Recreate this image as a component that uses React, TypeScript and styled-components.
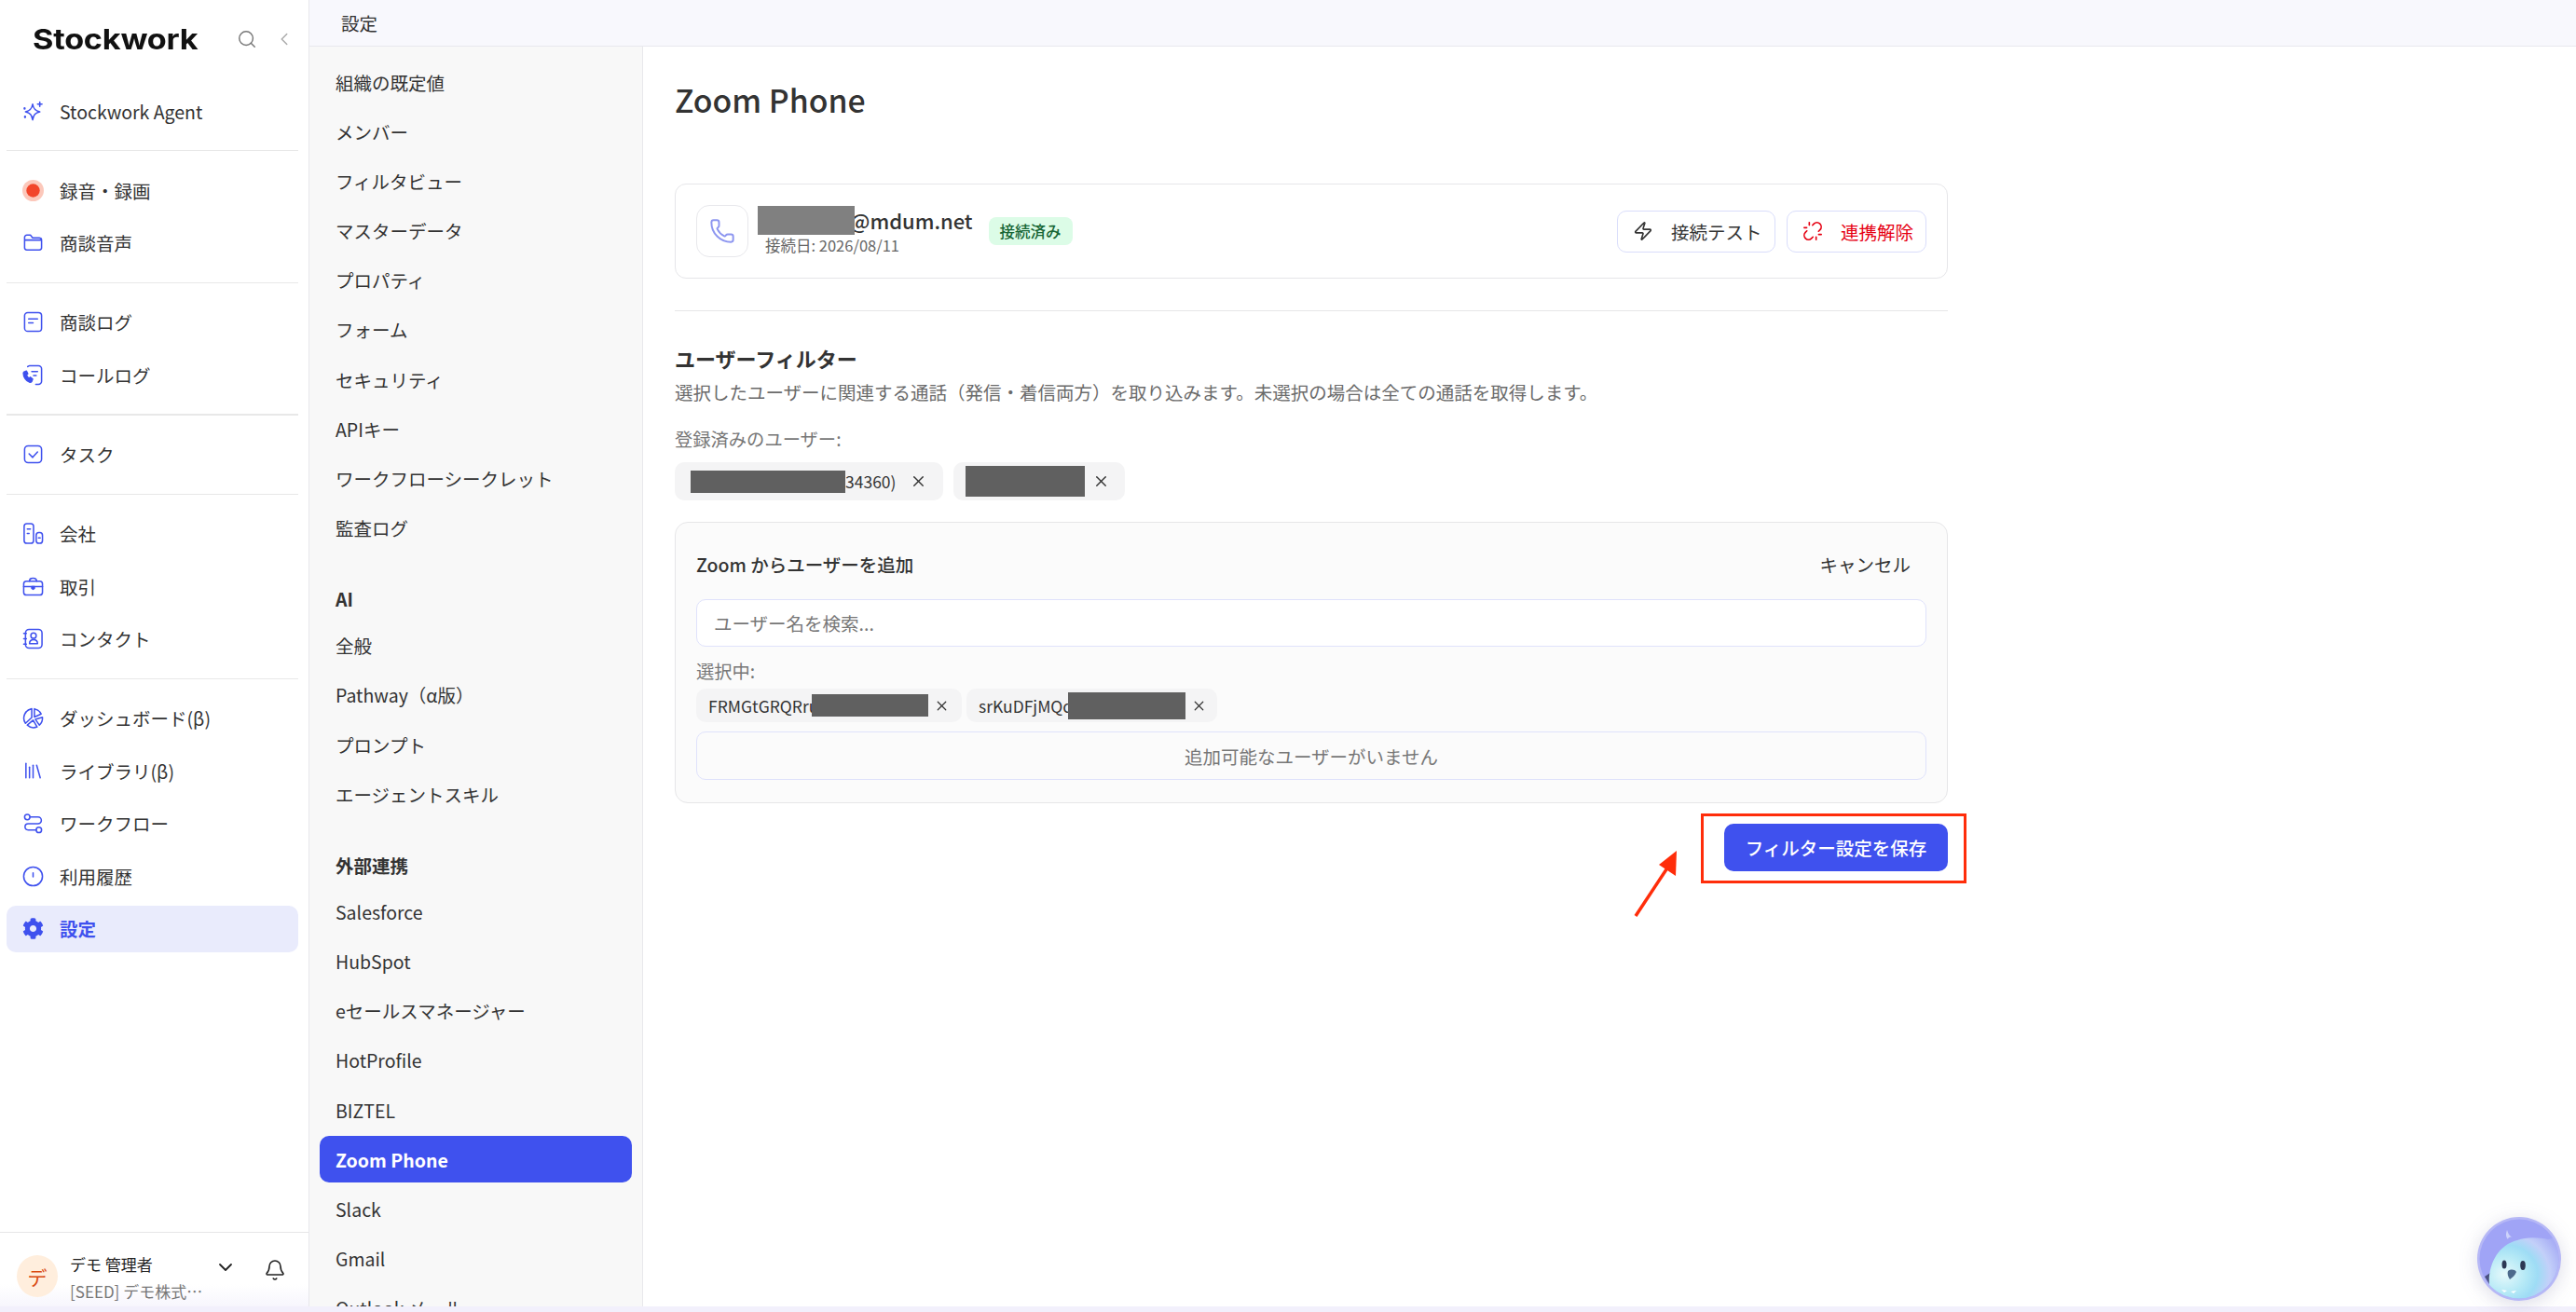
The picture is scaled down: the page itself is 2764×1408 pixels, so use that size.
import styled, { createGlobalStyle } from 'styled-components';
import { Bell, ChevronDown, ChevronLeft, Library, Phone, Search, Unlink, X, Zap } from 'lucide-react';
import { FaCog } from 'react-icons/fa';
import type { ReactNode } from 'react';

const BLUE = '#3f51ee';

const GlobalStyle = createGlobalStyle`
    html, body {
        margin: 0;
        padding: 0;
        background: #ffffff;
    }
    * {
        box-sizing: border-box;
    }
    body {
        font-family: 'Noto Sans CJK JP', 'Noto Sans', sans-serif;
        color: #333333;
    }
`;

const Page = styled.div`
    position: relative;
    width: 2764px;
    height: 1408px;
    overflow: hidden;
    display: flex;
    flex-direction: column;
`;

const Shell = styled.div`
    flex: 1;
    min-height: 0;
    display: flex;
`;

const BottomStrip = styled.div`
    height: 6px;
    background: #f2f0fc;
`;

const Sidebar = styled.aside`
    width: 332px;
    flex-shrink: 0;
    border-right: 1px solid #e8e8ec;
    display: flex;
    flex-direction: column;
    background: #ffffff;
`;

const SidebarHeader = styled.div`
    height: 84px;
    margin-bottom: 10px;
    padding-left: 35px;
    display: flex;
    align-items: center;
    color: #777777;
`;

const Logo = styled.div`
    width: 219px;
    font-family: 'Inter', sans-serif;
    font-weight: 700;
    font-size: 30px;
    letter-spacing: -0.2px;
    color: #111111;
    transform: scaleX(1.14);
    transform-origin: left center;
`;

const CollapseIcon = styled.span`
    display: flex;
    margin-left: 18px;
    color: #aaaaaa;
`;

const Nav = styled.nav`
    padding: 0 11px 0 7px;
`;

const NavGroup = styled.div`
    display: flex;
    flex-direction: column;
    gap: 6.4px;
`;

const NavDivider = styled.div`
    height: 1.5px;
    margin: 16.9px 0;
    background: #e8e8e8;
`;

const NavRow = styled.div<{ $active?: boolean }>`
    height: 50px;
    padding-left: 17px;
    display: flex;
    align-items: center;
    gap: 17px;
    border-radius: 10px;
    font-size: 19.5px;
    font-weight: ${(p) => (p.$active ? 700 : 400)};
    color: ${(p) => (p.$active ? BLUE : '#333333')};
    background: ${(p) => (p.$active ? '#e9ebfc' : 'transparent')};
`;

const NavIcon = styled.svg`
    width: 23px;
    height: 23px;
    flex-shrink: 0;
    fill: none;
    stroke: ${BLUE};
    stroke-width: 1.6;
    stroke-linecap: round;
    stroke-linejoin: round;
`;

const SidebarFooter = styled.div`
    margin-top: auto;
    height: 80px;
    padding: 14px 0 0 18px;
    border-top: 1px solid #e6e6e8;
    display: flex;
    align-items: center;
    background: linear-gradient(180deg, #ffffff 70%, #f7f6fd 100%);
`;

const Avatar = styled.div`
    width: 44px;
    height: 45px;
    border-radius: 50%;
    flex-shrink: 0;
    background: #ffeedd;
    color: #d9480f;
    font-size: 21px;
    display: flex;
    align-items: center;
    justify-content: center;
`;

const UserInfo = styled.div`
    width: 155px;
    margin: 2px 0 0 13px;
    display: flex;
    flex-direction: column;
    gap: 4px;
`;

const UserName = styled.div`
    font-size: 17px;
    line-height: 25px;
    color: #222222;
`;

const UserOrg = styled.div`
    font-size: 17px;
    line-height: 25px;
    color: #777777;
    white-space: nowrap;
`;

const FooterButton = styled.span<{ $gap: number; $lift: number }>`
    display: flex;
    margin-left: ${(p) => p.$gap}px;
    margin-bottom: ${(p) => p.$lift}px;
    color: #222222;
`;

const MainColumn = styled.div`
    flex: 1;
    min-width: 0;
    display: flex;
    flex-direction: column;
`;

const TopBar = styled.header`
    height: 50px;
    flex-shrink: 0;
    padding-left: 34px;
    display: flex;
    align-items: center;
    font-size: 19.5px;
    background: #f8f8fd;
    border-bottom: 1px solid #e8e8ee;
`;

const Workspace = styled.div`
    flex: 1;
    min-height: 0;
    display: flex;
`;

const SubNav = styled.nav`
    width: 358px;
    flex-shrink: 0;
    padding: 13px 11px 0 11px;
    overflow: hidden;
    background: #f8f8f8;
    border-right: 1px solid #e8e8ec;
`;

const SubNavItem = styled.div<{ $active?: boolean }>`
    height: 50px;
    margin-bottom: 3.2px;
    padding-left: 17px;
    display: flex;
    align-items: center;
    border-radius: 10px;
    font-size: 19.5px;
    font-weight: ${(p) => (p.$active ? 600 : 400)};
    color: ${(p) => (p.$active ? '#ffffff' : '#333333')};
    background: ${(p) => (p.$active ? BLUE : 'transparent')};
`;

const SubNavHeading = styled.div`
    height: 36px;
    margin: 33px 0 7px;
    padding-left: 17px;
    display: flex;
    align-items: center;
    font-size: 19.5px;
    font-weight: 600;
    color: #333333;
`;

const Content = styled.main`
    flex: 1;
    min-width: 0;
    padding: 32px 0 0 34px;
`;

const ContentInner = styled.div`
    width: 1366px;
    display: flex;
    flex-direction: column;
`;

const Title = styled.h1`
    margin: 0 0 65px;
    font-size: 33.8px;
    line-height: 50px;
    font-weight: 500;
    color: #333333;
`;

const ConnectionCard = styled.section`
    height: 102px;
    padding: 0 22px;
    border: 1px solid #e6e6e9;
    border-radius: 12px;
    display: flex;
    align-items: center;
`;

const PhoneTile = styled.div`
    width: 56px;
    height: 56px;
    border: 1px solid #e8e8ec;
    border-radius: 14px;
    display: flex;
    align-items: center;
    justify-content: center;
    color: #8d96f0;
`;

const AccountInfo = styled.div`
    margin-left: 10px;
    display: flex;
    flex-direction: column;
`;

const AccountEmail = styled.div`
    height: 30px;
    display: flex;
    align-items: center;
    font-size: 22px;
    font-weight: 500;
    color: #333333;
`;

const Redaction = styled.span<{ $w: number; $h: number; $tone?: string; $overlap?: number; $lead?: number }>`
    display: block;
    flex-shrink: 0;
    position: relative;
    width: ${(p) => p.$w}px;
    height: ${(p) => p.$h}px;
    margin-left: ${(p) => -(p.$lead ?? 0)}px;
    margin-right: ${(p) => -(p.$overlap ?? 0)}px;
    background: ${(p) => p.$tone ?? '#606060'};
`;

const ConnectedDate = styled.div`
    margin-left: 8px;
    font-size: 16.5px;
    line-height: 24px;
    color: #666666;
`;

const StatusBadge = styled.span`
    height: 30px;
    margin: 0 0 0 17px;
    padding: 0 12px;
    display: flex;
    align-items: center;
    border-radius: 8px;
    font-size: 16.5px;
    font-weight: 500;
    color: #166534;
    background: #dcfce7;
`;

const CardActions = styled.div`
    margin-left: auto;
    display: flex;
    gap: 12px;
`;

const OutlineButton = styled.button<{ $danger?: boolean; $width: number }>`
    width: ${(p) => p.$width}px;
    height: 45px;
    padding: 0 0 0 16px;
    display: flex;
    align-items: center;
    gap: 19px;
    font-family: inherit;
    font-size: 19.5px;
    color: ${(p) => (p.$danger ? '#e60012' : '#333333')};
    background: #ffffff;
    border: 1px solid #d9ddfb;
    border-radius: 10px;
`;

const SectionDivider = styled.div`
    height: 1px;
    margin: 34px 0 35px;
    background: #e6e6e8;
`;

const SectionTitle = styled.h2`
    margin: 0;
    font-size: 22px;
    line-height: 30px;
    font-weight: 600;
    color: #333333;
`;

const SectionText = styled.p`
    margin: 8px 0 0;
    font-size: 19.5px;
    line-height: 28px;
    color: #6b6b6b;
`;

const FieldLabel = styled.div<{ $top: number }>`
    margin-top: ${(p) => p.$top}px;
    font-size: 19.3px;
    line-height: 26px;
    color: #777777;
`;

const ChipRow = styled.div<{ $gap: number; $top: number }>`
    margin-top: ${(p) => p.$top}px;
    display: flex;
    gap: ${(p) => p.$gap}px;
`;

const Chip = styled.span<{ $w: number; $h: number; $pad: number }>`
    width: ${(p) => p.$w}px;
    height: ${(p) => p.$h}px;
    padding-left: ${(p) => p.$pad}px;
    display: flex;
    align-items: center;
    border-radius: 10px;
    font-size: 17.5px;
    color: #333333;
    background: #f4f4f5;
    overflow: hidden;
    white-space: nowrap;
`;

const ChipClose = styled.span<{ $gap: number }>`
    display: flex;
    margin-left: ${(p) => p.$gap}px;
    color: #333333;
`;

const AddPanel = styled.section`
    height: 302px;
    margin-top: 23px;
    padding: 25px 22px 0;
    display: flex;
    flex-direction: column;
    background: #fbfbfb;
    border: 1px solid #e6e6e8;
    border-radius: 14px;
`;

const AddPanelHeader = styled.div`
    height: 38px;
    padding-right: 17px;
    display: flex;
    align-items: center;
    justify-content: space-between;
`;

const AddPanelTitle = styled.div`
    font-size: 19.5px;
    font-weight: 500;
    color: #333333;
`;

const CancelText = styled.span`
    font-size: 19.5px;
    color: #333333;
`;

const SearchInput = styled.input`
    height: 51px;
    margin-top: 19px;
    padding: 0 18px;
    font-family: inherit;
    font-size: 19.5px;
    background: #ffffff;
    border: 1px solid #dfe2fb;
    border-radius: 10px;
    outline: none;
    &::placeholder {
        color: #777777;
        opacity: 1;
    }
`;

const EmptyBox = styled.div`
    height: 52px;
    margin-top: 10px;
    display: flex;
    align-items: center;
    justify-content: center;
    font-size: 19.5px;
    color: #777777;
    border: 1px solid #dfe2fb;
    border-radius: 10px;
`;

const SaveRow = styled.div`
    margin-top: 22px;
    display: flex;
    justify-content: flex-end;
`;

const SaveButton = styled.button`
    width: 240px;
    height: 51px;
    font-family: inherit;
    font-size: 19.5px;
    font-weight: 500;
    color: #ffffff;
    background: ${BLUE};
    border: none;
    border-radius: 10px;
`;

// annotation drawn on top of the screenshot
const Highlight = styled.div`
    position: absolute;
    left: 1825px;
    top: 873px;
    width: 285px;
    height: 75px;
    border: 3.5px solid #ff2d0a;
`;

const ArrowMark = styled.svg`
    position: absolute;
    left: 1745px;
    top: 905px;
    width: 65px;
    height: 85px;
`;

const Assistant = styled.svg`
    position: absolute;
    left: 2658px;
    top: 1306px;
    width: 90px;
    height: 90px;
    filter: drop-shadow(0 4px 10px rgba(60, 60, 120, 0.18));
`;

const SparkIcon = () => (
    <NavIcon viewBox="0 0 24 24">
        <path d="M11.500 4c.9 5.200 2.800 7.300 8 8.500-5.200 1.100-7.100 3.300-8 9-.9-5.700-2.800-7.900-8-9 5.200-1.200 7.100-3.300 8-8.500z" />
        <path d="M19.500 1.500v5M17 4h5" />
        <path d="M2.500 8.500v.5M3 18v.5" strokeWidth="2.400" />
    </NavIcon>
);

const RecordIcon = () => (
    <NavIcon viewBox="0 0 24 24" style={{ stroke: 'none' }}>
        <circle cx="12" cy="12" r="12" fill="#fcc8bb" />
        <circle cx="12" cy="12" r="7.500" fill="#f2452a" />
    </NavIcon>
);

const FolderIcon = () => (
    <NavIcon viewBox="0 0 24 24">
        <path d="M2.500 6a2.500 2.500 0 0 1 2.500-2.500h4l2.500 3h7.500a2.500 2.500 0 0 1 2.500 2.500v8.500a2.500 2.500 0 0 1-2.500 2.500H5A2.500 2.500 0 0 1 2.500 17.500zM2.500 9h19" />
    </NavIcon>
);

const NoteIcon = () => (
    <NavIcon viewBox="0 0 24 24">
        <rect x="2.500" y="1.500" width="19" height="21" rx="3.500" />
        <path d="M7 8.500h10M7 13h5" />
    </NavIcon>
);

const CallLogIcon = () => (
    <NavIcon viewBox="0 0 24 24">
        <path d="M6 2.500A3.500 3.500 0 0 1 8 1.500h10A3.500 3.500 0 0 1 21.500 5v14a3.500 3.500 0 0 1-3.500 3.500h-3" />
        <path d="M10.500 8h6.500M12.500 12.500h3" />
        <path
            d="M2 8.500l2.500-1 1.500 3-1.500 1.200c.6 1.800 1.600 3.200 3 4l1.400-1.200 2.600 2-1 2.500c-.6.900-1.600 1.200-2.600.9C4.200 19 1.200 14 1.200 10c0-.6.300-1.100.800-1.500z"
            fill={BLUE}
        />
    </NavIcon>
);

const TaskIcon = () => (
    <NavIcon viewBox="0 0 24 24">
        <rect x="2.500" y="2.500" width="19" height="19" rx="4" />
        <path d="M7.500 11.500l4 4 5.500-6" />
    </NavIcon>
);

const CompanyIcon = () => (
    <NavIcon viewBox="0 0 24 24">
        <rect x="2" y="1" width="10.500" height="22" rx="3" />
        <rect x="15.500" y="11" width="7" height="12" rx="3" />
        <path d="M5.500 7h3.500M18 17h2M5.500 12h2" />
    </NavIcon>
);

const DealIcon = () => (
    <NavIcon viewBox="0 0 24 24">
        <rect x="1.500" y="6" width="21" height="15.500" rx="3" />
        <path d="M8 6c0-2.500 1-3.500 4-3.500s4 1 4 3.500M1.500 12h21" />
        <path d="M10.500 12h3v2l-1.500 1-1.500-1z" fill={BLUE} />
    </NavIcon>
);

const ContactIcon = () => (
    <NavIcon viewBox="0 0 24 24">
        <rect x="3.500" y="1.500" width="18.500" height="21" rx="4" />
        <circle cx="12.500" cy="8.500" r="3" />
        <path d="M8 17.500c0-3 1.500-4.500 4.500-4.500s4.500 1.500 4.500 4.500zM1.500 6h3M1.500 12h3M1.500 18h3" />
    </NavIcon>
);

const PieIcon = () => (
    <NavIcon viewBox="0 0 24 24">
        <path d="M10.500 1.700A10.500 10.500 0 0 0 3.500 18l7-6.500z" />
        <path d="M13.500 1.700A10.500 10.500 0 0 1 21 7.500l-7.500 3.500z" />
        <path d="M14.500 13.500l8-2.200A10.500 10.500 0 0 1 19 20z" />
        <path d="M5.500 20l6.500-5.500 4.500 7.500a10.500 10.500 0 0 1-11-2z" />
    </NavIcon>
);

const FlowIcon = () => (
    <NavIcon viewBox="0 0 24 24">
        <circle cx="5.500" cy="5" r="3" />
        <path d="M8.500 5h9a3.500 3.500 0 0 1 0 7.500h-11a3.500 3.500 0 0 0 0 7h9" />
        <circle cx="18.500" cy="19.500" r="3" />
    </NavIcon>
);

const ClockIcon = () => (
    <NavIcon viewBox="0 0 24 24">
        <circle cx="12" cy="12" r="10.500" />
        <path d="M12 8v4.500" />
    </NavIcon>
);

const LucideIcon = styled.span`
    display: flex;
    width: 23px;
    justify-content: center;
    flex-shrink: 0;
    color: ${BLUE};
`;

const NavItem = ({ icon, label, active }: { icon: ReactNode; label: string; active?: boolean }) => (
    <NavRow $active={active}>
        {icon}
        <span>{label}</span>
    </NavRow>
);

const generalItems = [
    '組織の既定値',
    'メンバー',
    'フィルタビュー',
    'マスターデータ',
    'プロパティ',
    'フォーム',
    'セキュリティ',
    'APIキー',
    'ワークフローシークレット',
    '監査ログ',
];
const aiItems = ['全般', 'Pathway（α版）', 'プロンプト', 'エージェントスキル'];
const integrationItems = [
    'Salesforce',
    'HubSpot',
    'eセールスマネージャー',
    'HotProfile',
    'BIZTEL',
    'Zoom Phone',
    'Slack',
    'Gmail',
    'Outlook メール',
];

const AssistantBird = () => (
    <Assistant viewBox="0 0 90 90">
        <defs>
            <clipPath id="birdClip">
                <circle cx="45" cy="45" r="42.500" />
            </clipPath>
            <radialGradient id="birdBody" cx="0.22" cy="0.58" r="0.85">
                <stop offset="0" stopColor="#e6f9fb" />
                <stop offset="0.35" stopColor="#b5e9f6" />
                <stop offset="0.55" stopColor="#9edcf5" />
                <stop offset="0.75" stopColor="#c3d0f9" />
                <stop offset="1" stopColor="#a9aff5" />
            </radialGradient>
        </defs>
        <circle cx="45" cy="45" r="45" fill="#b6b8f6" />
        <circle cx="45" cy="45" r="42.500" fill="#a0a4f6" />
        <g clipPath="url(#birdClip)">
            <path d="M8 64l6-4-1 12z" fill="#4a4f80" />
            <path d="M33 24c-3-3-2-7-1-10 1 3 2 6 6 8-3-1-5 0-5 2z" fill="#cdd3fb" />
            <path
                d="M13 74c-2-22 9-44 30-49 10-4 24-3 33-1l9-2c4 14 4 34 3 68H20c-5-4-7-9-7-16z"
                fill="url(#birdBody)"
            />
            <ellipse cx="29" cy="51" rx="2.500" ry="4.500" fill="#2c3854" />
            <ellipse cx="49" cy="52" rx="2.800" ry="5" fill="#2c3854" />
            <path d="M33 58c3-2 7-2 9 1-1 3-4 6-7 8-2-3-3-6-2-9z" fill="#4d6a8c" />
            <path d="M26 78l6 1-3 2zM36 80l6-1-3 3z" fill="#ffffff" />
        </g>
    </Assistant>
);

const App = () => {
    return (
        <Page>
            <GlobalStyle />
            <Shell>
                <Sidebar>
                    <SidebarHeader>
                        <Logo>Stockwork</Logo>
                        <Search size={22} strokeWidth={1.6} />
                        <CollapseIcon>
                            <ChevronLeft size={22} strokeWidth={1.6} />
                        </CollapseIcon>
                    </SidebarHeader>
                    <Nav>
                        <NavItem icon={<SparkIcon />} label="Stockwork Agent" />
                        <NavDivider />
                        <NavGroup>
                            <NavItem icon={<RecordIcon />} label="録音・録画" />
                            <NavItem icon={<FolderIcon />} label="商談音声" />
                        </NavGroup>
                        <NavDivider />
                        <NavGroup>
                            <NavItem icon={<NoteIcon />} label="商談ログ" />
                            <NavItem icon={<CallLogIcon />} label="コールログ" />
                        </NavGroup>
                        <NavDivider />
                        <NavItem icon={<TaskIcon />} label="タスク" />
                        <NavDivider />
                        <NavGroup>
                            <NavItem icon={<CompanyIcon />} label="会社" />
                            <NavItem icon={<DealIcon />} label="取引" />
                            <NavItem icon={<ContactIcon />} label="コンタクト" />
                        </NavGroup>
                        <NavDivider />
                        <NavGroup>
                            <NavItem icon={<PieIcon />} label="ダッシュボード(β)" />
                            <NavItem
                                icon={
                                    <LucideIcon>
                                        <Library size={24} strokeWidth={1.6} />
                                    </LucideIcon>
                                }
                                label="ライブラリ(β)"
                            />
                            <NavItem icon={<FlowIcon />} label="ワークフロー" />
                            <NavItem icon={<ClockIcon />} label="利用履歴" />
                            <NavItem
                                active
                                icon={
                                    <LucideIcon>
                                        <FaCog size={23} />
                                    </LucideIcon>
                                }
                                label="設定"
                            />
                        </NavGroup>
                    </Nav>
                    <SidebarFooter>
                        <Avatar>デ</Avatar>
                        <UserInfo>
                            <UserName>デモ 管理者</UserName>
                            <UserOrg>[SEED] デモ株式…</UserOrg>
                        </UserInfo>
                        <FooterButton $gap={0} $lift={20}>
                            <ChevronDown size={24} strokeWidth={1.8} />
                        </FooterButton>
                        <FooterButton $gap={29} $lift={14}>
                            <Bell size={24} strokeWidth={1.6} />
                        </FooterButton>
                    </SidebarFooter>
                </Sidebar>
                <MainColumn>
                    <TopBar>設定</TopBar>
                    <Workspace>
                        <SubNav>
                            {generalItems.map((item) => (
                                <SubNavItem key={item}>{item}</SubNavItem>
                            ))}
                            <SubNavHeading>AI</SubNavHeading>
                            {aiItems.map((item) => (
                                <SubNavItem key={item}>{item}</SubNavItem>
                            ))}
                            <SubNavHeading>外部連携</SubNavHeading>
                            {integrationItems.map((item) => (
                                <SubNavItem key={item} $active={item === 'Zoom Phone'}>
                                    {item}
                                </SubNavItem>
                            ))}
                        </SubNav>
                        <Content>
                            <ContentInner>
                                <Title>Zoom Phone</Title>
                                <ConnectionCard>
                                    <PhoneTile>
                                        <Phone size={28} strokeWidth={1.7} />
                                    </PhoneTile>
                                    <AccountInfo>
                                        <AccountEmail>
                                            <Redaction $w={104} $h={31} $tone="#808080" $overlap={5} />
                                            @mdum.net
                                        </AccountEmail>
                                        <ConnectedDate>接続日: 2026/08/11</ConnectedDate>
                                    </AccountInfo>
                                    <StatusBadge>接続済み</StatusBadge>
                                    <CardActions>
                                        <OutlineButton $width={170}>
                                            <Zap size={22} strokeWidth={1.8} />
                                            接続テスト
                                        </OutlineButton>
                                        <OutlineButton $width={150} $danger>
                                            <Unlink size={22} strokeWidth={1.8} />
                                            連携解除
                                        </OutlineButton>
                                    </CardActions>
                                </ConnectionCard>
                                <SectionDivider />
                                <SectionTitle>ユーザーフィルター</SectionTitle>
                                <SectionText>
                                    選択したユーザーに関連する通話（発信・着信両方）を取り込みます。未選択の場合は全ての通話を取得します。
                                </SectionText>
                                <FieldLabel $top={23}>登録済みのユーザー:</FieldLabel>
                                <ChipRow $gap={11} $top={12}>
                                    <Chip $w={288} $h={41} $pad={17}>
                                        <Redaction $w={166} $h={24} />
                                        34360)
                                        <ChipClose $gap={15}>
                                            <X size={19} strokeWidth={1.7} />
                                        </ChipClose>
                                    </Chip>
                                    <Chip $w={184} $h={41} $pad={13}>
                                        <Redaction $w={128} $h={33} />
                                        <ChipClose $gap={8}>
                                            <X size={19} strokeWidth={1.7} />
                                        </ChipClose>
                                    </Chip>
                                </ChipRow>
                                <AddPanel>
                                    <AddPanelHeader>
                                        <AddPanelTitle>Zoom からユーザーを追加</AddPanelTitle>
                                        <CancelText>キャンセル</CancelText>
                                    </AddPanelHeader>
                                    <SearchInput placeholder="ユーザー名を検索..." readOnly />
                                    <FieldLabel $top={13}>選択中:</FieldLabel>
                                    <ChipRow $gap={5} $top={6}>
                                        <Chip $w={285} $h={36} $pad={13}>
                                            FRMGtGRQRru
                                            <Redaction $w={125} $h={24} $lead={7} />
                                            <ChipClose $gap={6}>
                                                <X size={17} strokeWidth={1.7} />
                                            </ChipClose>
                                        </Chip>
                                        <Chip $w={269} $h={36} $pad={13}>
                                            srKuDFjMQc
                                            <Redaction $w={126} $h={29} $lead={3} />
                                            <ChipClose $gap={6}>
                                                <X size={17} strokeWidth={1.7} />
                                            </ChipClose>
                                        </Chip>
                                    </ChipRow>
                                    <EmptyBox>追加可能なユーザーがいません</EmptyBox>
                                </AddPanel>
                                <SaveRow>
                                    <SaveButton>フィルター設定を保存</SaveButton>
                                </SaveRow>
                            </ContentInner>
                        </Content>
                    </Workspace>
                </MainColumn>
            </Shell>
            <BottomStrip />
            <Highlight />
            <ArrowMark viewBox="0 0 65 85">
                <path d="M10 78L47 22" stroke="#ff2d0a" strokeWidth="3.500" fill="none" />
                <path d="M54 8L53 35L35 23z" fill="#ff2d0a" />
            </ArrowMark>
            <AssistantBird />
        </Page>
    );
};

export default App;
